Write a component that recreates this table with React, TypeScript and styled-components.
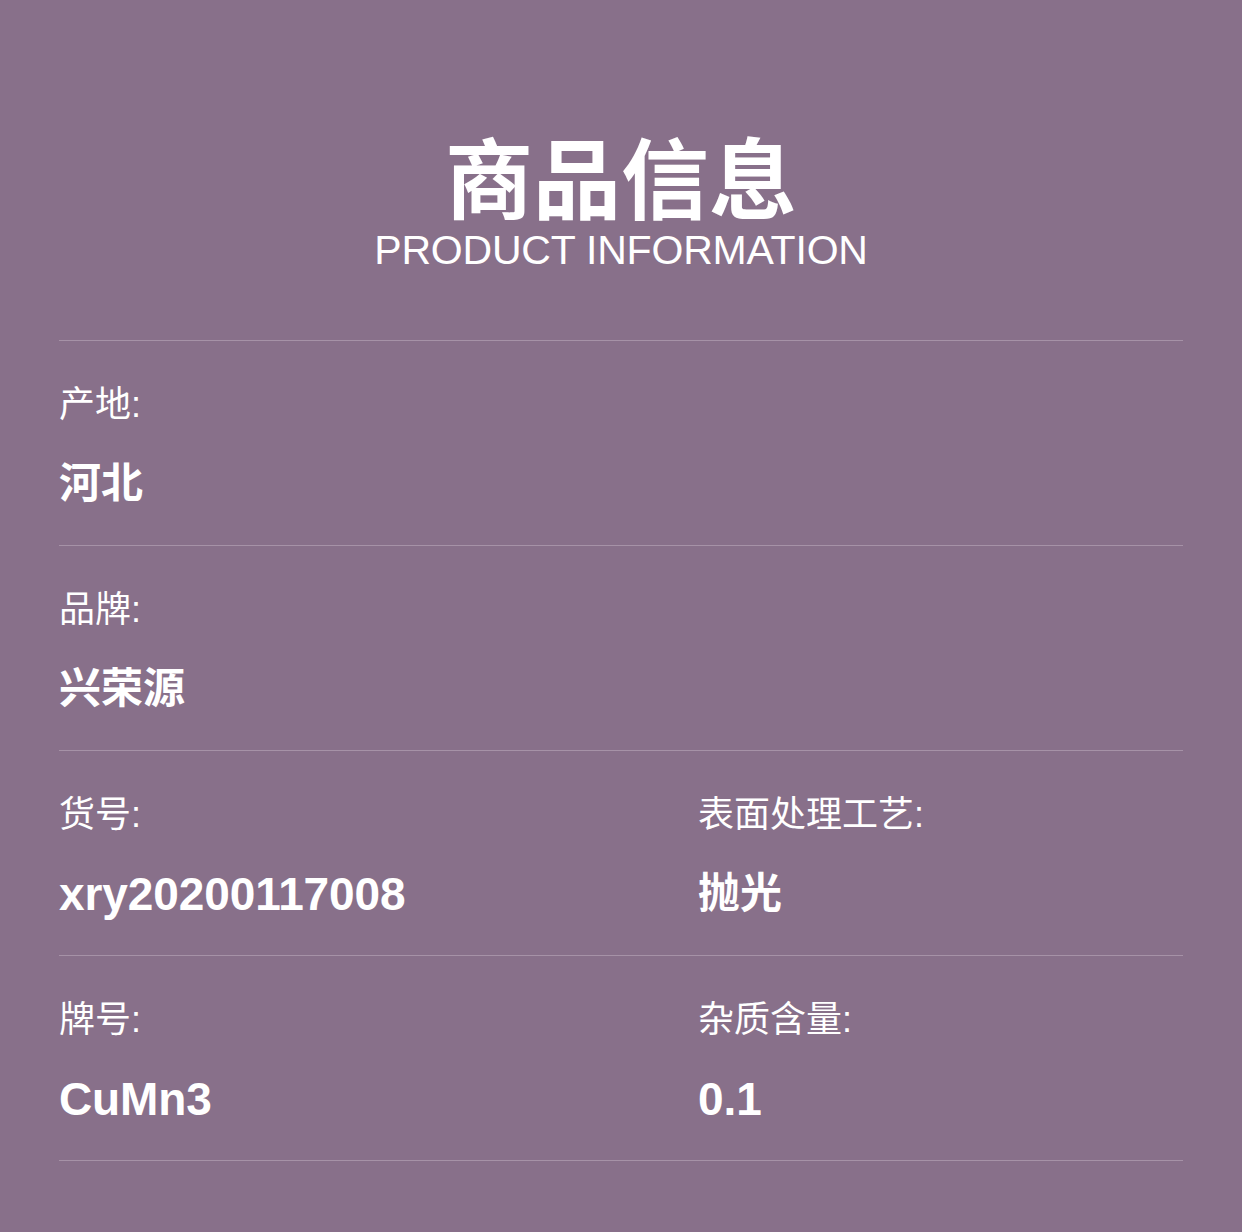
import styled, { createGlobalStyle } from 'styled-components';

const GlobalStyle = createGlobalStyle`
  html, body {
    margin: 0;
    padding: 0;
    background: #88708a;
  }
`;

const Page = styled.div`
  width: 1242px;
  min-height: 1232px;
  background: #88708a;
  color: #ffffff;
  font-family: 'Liberation Sans', 'Noto Sans CJK SC', sans-serif;
  padding: 0 59px;
  box-sizing: border-box;
`;

const Header = styled.div`
  display: flex;
  flex-direction: column;
  align-items: center;
  padding-top: 134px;
  height: 340px;
  box-sizing: border-box;
`;

const Title = styled.h1`
  margin: 0;
  font-family: 'Noto Sans CJK SC', sans-serif;
  font-size: 88px;
  line-height: 80px;
  font-weight: 700;
`;

const Subtitle = styled.div`
  margin-top: 16px;
  font-size: 41px;
  line-height: 41px;
  letter-spacing: -0.2px;
  font-weight: 400;
`;

const Row = styled.div<{ columns: number }>`
  display: grid;
  grid-template-columns: ${({ columns }) => (columns === 2 ? '639px 1fr' : '1fr')};
  border-top: 1px solid #a692a7;
  height: 205px;
  box-sizing: border-box;
  padding-top: 46px;
`;

const Field = styled.div`
  display: flex;
  flex-direction: column;
`;

const Label = styled.div`
  font-size: 36px;
  line-height: 36px;
  font-weight: 400;
`;

const Value = styled.div<{ $cjk: boolean }>`
  margin-top: 40px;
  font-size: ${({ $cjk }) => ($cjk ? '42px' : '46px')};
  line-height: 42px;
  font-weight: 700;
  letter-spacing: ${({ $cjk }) => ($cjk ? '0' : '-0.1px')};
`;

const BottomLine = styled.div`
  border-top: 1px solid #a692a7;
`;

const rows: { label: string; value: string }[][] = [
  [{ label: '产地:', value: '河北' }],
  [{ label: '品牌:', value: '兴荣源' }],
  [
    { label: '货号:', value: 'xry20200117008' },
    { label: '表面处理工艺:', value: '抛光' },
  ],
  [
    { label: '牌号:', value: 'CuMn3' },
    { label: '杂质含量:', value: '0.1' },
  ],
];

const isCjk = (text: string) => /[\u4e00-\u9fff]/.test(text);

export default function App() {
  return (
    <>
      <GlobalStyle />
      <Page>
        <Header>
          <Title>商品信息</Title>
          <Subtitle>PRODUCT INFORMATION</Subtitle>
        </Header>
        {rows.map((row, i) => (
          <Row key={i} columns={row.length}>
            {row.map((field) => (
              <Field key={field.label}>
                <Label>{field.label}</Label>
                <Value $cjk={isCjk(field.value)}>{field.value}</Value>
              </Field>
            ))}
          </Row>
        ))}
        <BottomLine />
      </Page>
    </>
  );
}
